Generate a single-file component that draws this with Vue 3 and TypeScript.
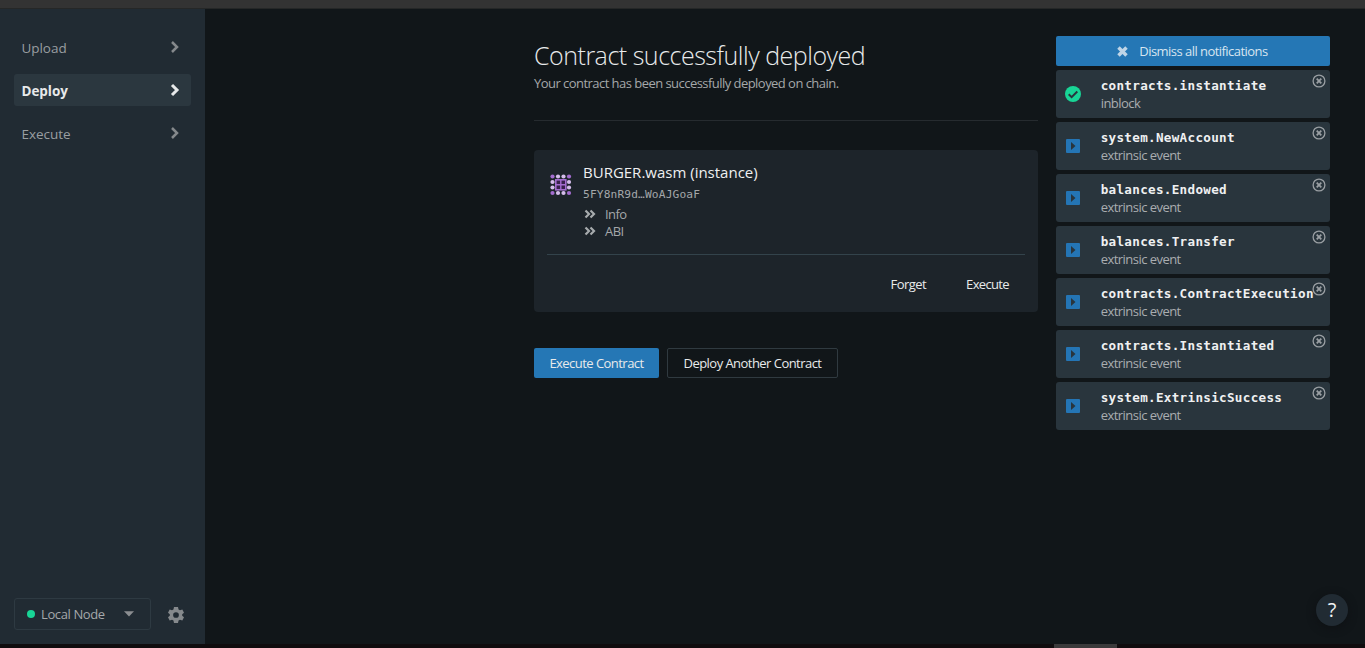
<script setup lang="ts">
interface NavItem { label: string; active: boolean }
interface Notice { title: string; text: string; done: boolean }
interface Dot { x: number; y: number; light: boolean }

const nav: NavItem[] = [
  { label: 'Upload', active: false },
  { label: 'Deploy', active: true },
  { label: 'Execute', active: false },
]

const event = (title: string): Notice => ({ title, text: 'extrinsic event', done: false })
const notices: Notice[] = [
  { title: 'contracts.instantiate', text: 'inblock', done: true },
  event('system.NewAccount'),
  event('balances.Endowed'),
  event('balances.Transfer'),
  event('contracts.ContractExecution'),
  event('contracts.Instantiated'),
  event('system.ExtrinsicSuccess'),
]

const steps = [2.5, 8, 13.5, 19]
const dots: Dot[] = steps.flatMap((y, r) =>
  steps
    .map((x, c) => ({ x, y, light: (r === 0 || r === 3) !== (c === 0 || c === 3), edge: r % 3 === 0 || c % 3 === 0 }))
    .filter((d) => d.edge),
)
</script>

<template>
  <div class="page">
    <div class="topbar"></div>
    <div class="body">
      <aside class="sidebar">
        <nav>
          <a v-for="n in nav" :key="n.label" class="nav-item" :class="{ active: n.active }">
            <span class="nav-label">{{ n.label }}</span>
            <svg width="10" height="14" viewBox="0 0 10 14"><path d="M2 2l5 5-5 5" fill="none" stroke="currentColor" :stroke-width="n.active ? 3 : 2.5" /></svg>
          </a>
        </nav>
        <div class="footer">
          <div class="node">
            <i class="status"></i>
            <span class="t local">Local Node</span>
            <svg width="10" height="6" viewBox="0 0 10 6"><path d="M0 .3h10L5 5.5z" fill="#8b8e91" /></svg>
          </div>
          <svg class="gear" width="16" height="16" viewBox="0 0 24 24"><path fill="#85898c" fill-rule="evenodd" d="M9 0h6l.8 3.6 2.2 1.3 3.5-1.1 2.5 5-2.7 2.2v2l2.7 2.3-2.5 4.9-3.5-1.1-2.2 1.3L15 24H9l-.8-3.6L6 19.1l-3.5 1.1L0 15.3 2.700 13v-2L0 8.800l2.500-5L6 4.900l2.200-1.300zM12 7.700a4.300 4.300 0 100 8.600 4.300 4.300 0 000-8.600z" /></svg>
        </div>
      </aside>

      <main class="content">
        <header>
          <h1><span class="t">Contract successfully deployed</span></h1>
          <p><span class="t">Your contract has been successfully deployed on chain.</span></p>
        </header>
        <section class="card">
          <div class="contract">
            <svg class="identicon" width="22" height="22" viewBox="0 0 22 22">
              <circle v-for="(d, i) in dots" :key="i" :cx="d.x" :cy="d.y" r="2.1" :fill="d.light ? '#d5bdec' : '#a46dd0'" />
              <rect x="5.800" y="5.800" width="10" height="10" fill="#38204c" stroke="#a46dd0" stroke-width="1.600" />
              <path d="M10.800 5.500v10.500M5.500 10.800H16" stroke="#a46dd0" stroke-width="1.400" />
            </svg>
            <div class="details">
              <div class="name">BURGER.wasm (instance)</div>
              <div class="address">5FY8nR9d…WoAJGoaF</div>
              <div v-for="s in ['Info', 'ABI']" :key="s" class="expand">
                <svg width="12" height="10" viewBox="0 0 12 10"><path d="M1.500 1.500l3.500 3.500-3.500 3.500M6.500 1.500l3.500 3.500-3.500 3.500" fill="none" stroke="#a7abad" stroke-width="2.200" /></svg>
                <span class="t">{{ s }}</span>
              </div>
            </div>
          </div>
          <div class="actions"><span class="t">Forget</span><span class="t run">Execute</span></div>
        </section>
        <div class="buttons">
          <button class="primary"><span class="t">Execute Contract</span></button>
          <button class="outline"><span class="t">Deploy Another Contract</span></button>
        </div>
      </main>

      <aside class="notices">
        <button class="dismiss">
          <svg width="11" height="11" viewBox="0 0 11 11"><path d="M1.500 1.500l8 8M9.500 1.500l-8 8" stroke="#bfd5e7" stroke-width="3.500" /></svg>
          <span class="t">Dismiss all notifications</span>
        </button>
        <div class="list">
          <div v-for="n in notices" :key="n.title" class="notice">
            <svg v-if="n.done" class="mark" width="16" height="16" viewBox="0 0 16 16"><circle cx="8" cy="8" r="8" fill="#18d596" /><path d="M3.700 8.300l2.900 2.800 5.700-5.600" fill="none" stroke="#29353d" stroke-width="2" /></svg>
            <svg v-else class="mark" width="16" height="16" viewBox="0 0 16 16"><rect x="1" y="1" width="14" height="14" rx="1" fill="#2475b5" /><path d="M6 4l4.500 4L6 12z" fill="#29353d" /></svg>
            <div class="message">
              <div class="title">{{ n.title }}</div>
              <div class="text"><span class="t">{{ n.text }}</span></div>
            </div>
            <svg class="close" width="14" height="14" viewBox="0 0 14 14"><circle cx="7" cy="7" r="5.900" fill="none" stroke="#9a9fa3" stroke-width="1.300" /><path d="M4.700 4.700l4.600 4.600M9.300 4.700L4.700 9.300" stroke="#9a9fa3" stroke-width="1.800" /></svg>
          </div>
        </div>
      </aside>
      <div class="help">?</div>
    </div>
    <div class="bottombar"><i class="thumb"></i></div>
  </div>
</template>

<style>
html, body { background: #111619; overflow: hidden; }
</style>

<style scoped>
* { box-sizing: border-box; }
.page { width: 1365px; height: 648px; display: flex; flex-direction: column; font: 13px/18px "Open Sans", "Noto Sans", sans-serif; color: #a5a8aa; background: #111619; }
.t { white-space: nowrap; letter-spacing: -.54px; }
.topbar { height: 9px; background: #333; border-bottom: 1px solid #252727; flex: none; }
.body { height: 635px; display: flex; position: relative; }
.sidebar { width: 205px; background: #212b33; padding: 22px 14px 14px; display: flex; flex-direction: column; justify-content: space-between; }
nav { display: flex; flex-direction: column; gap: 11px; }
.nav-item { height: 32px; width: 177px; display: flex; align-items: center; justify-content: space-between; padding: 2px 11px 0 7.500px; border-radius: 3px; color: #999ea1; }
.nav-label { font-size: 13.500px; letter-spacing: -.05px; }
.nav-item svg { color: #85898c; margin-bottom: 3px; }
.nav-item.active { background: #2b373f; color: #e7e9ea; font-weight: 700; }
.nav-item.active svg { color: #e7e9ea; }
.footer { display: flex; align-items: center; }
.node { width: 137px; height: 32px; border: 1px solid #2e3a42; border-radius: 3px; display: flex; align-items: center; padding: 0 16px 0 12px; }
.node svg { margin-left: auto; }
.local { letter-spacing: -.38px; }
.status { width: 8px; height: 8px; border-radius: 50%; background: #18d596; margin: 0 6.500px 0 -.5px; }
.gear { margin-left: 17px; margin-top: 2px; }
.content { width: 504px; margin-left: 329px; }
header { height: 112px; border-bottom: 1px solid #262b2f; padding-top: 28px; }
h1 { margin: 0; font-size: 25px; line-height: 36px; font-weight: 300; color: #e8eaeb; }
h1 .t { letter-spacing: -.48px; }
p { margin: 1px 0 0; line-height: 18px; }
.card { margin-top: 29px; height: 162px; background: #1d242a; border-radius: 4px; padding: 11px 13px 0; }
.contract { height: 94px; border-bottom: 1px solid #33434b; display: flex; padding-left: 3px; }
.identicon { margin-top: 13px; }
.details { margin-left: 11px; }
.name { font-size: 15px; line-height: 22px; color: #eff0f1; white-space: nowrap; }
.address { font: 11.200px/20px "DejaVu Sans Mono", monospace; letter-spacing: .15px; padding-top: 2px; height: 20px; }
.expand { height: 17px; display: flex; align-items: center; gap: 9px; padding-left: 1px; position: relative; top: 2px; }
.actions { display: flex; justify-content: flex-end; gap: 40px; padding: 20px 16px 0 0; color: #e8eaeb; }
.run { letter-spacing: -.65px; }
.buttons { display: flex; gap: 8px; margin-top: 36px; }
button { height: 30px; border: 0; border-radius: 2px; padding: 0; font: inherit; color: #e8eaeb; display: flex; align-items: center; justify-content: center; }
.primary { width: 125px; background: #2577b5; }
.outline { width: 171px; background: transparent; border: 1px solid #303a40; }
.notices { width: 274px; margin-left: 18px; padding-top: 27px; }
.dismiss { width: 274px; background: #2577b5; gap: 11px; color: #d7e5f0; padding-right: 1px; }
.list { padding-top: 3.500px; display: flex; flex-direction: column; gap: 3.500px; }
.notice { height: 48.500px; background: #29353d; border-radius: 3px; display: flex; align-items: center; position: relative; padding-left: 9px; }
.message { margin-left: 19.700px; }
.title { font: 700 12.600px/18px "DejaVu Sans Mono", monospace; letter-spacing: .31px; color: #eff0f1; white-space: nowrap; margin: 1px 0 -1px; }
.text { color: #a9adb0; }
.close { position: absolute; right: 4px; top: 4.500px; }
.help { position: absolute; left: 1316px; top: 585px; width: 32px; height: 32px; border-radius: 50%; background: #212b33; color: #f0f2f3; font-size: 20px; line-height: 32px; text-align: center; box-shadow: 0 2px 8px #0e1114; }
.bottombar { height: 4px; background: #100c0e; }
.thumb { display: block; width: 63px; height: 4px; margin-left: 1054px; background: #3b3a3b; }
</style>
